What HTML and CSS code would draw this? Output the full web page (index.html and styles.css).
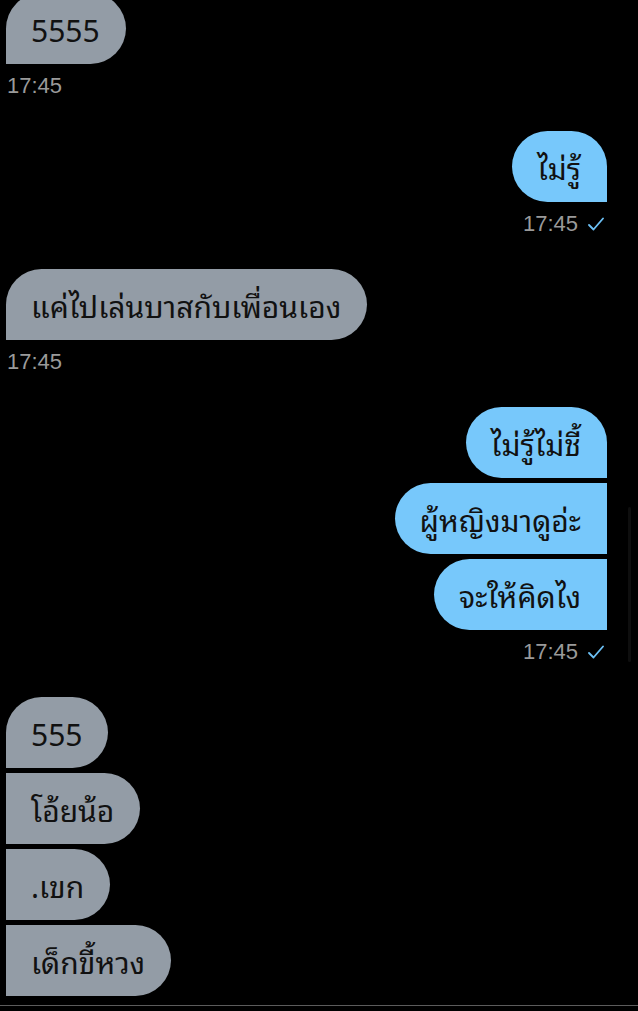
FILE: index.html
```html
<!DOCTYPE html>
<html lang="th">
<head>
  <meta charset="UTF-8" />
  <meta name="viewport" content="width=device-width, initial-scale=1.0"/>
  <title>Chat</title>
  <link rel="stylesheet" href="styles.css">
</head>
<body>
  <div class="chat">

    <div class="group in">
      <div class="bubble first">5555</div>
      <div class="time">17:45</div>
    </div>

    <div class="group out">
      <div class="bubble first">ไม่รู้</div>
      <div class="time">17:45 <svg class="tick" viewBox="0 0 16 14" width="16" height="14"><polyline points="1,8 5.5,12.5 15,1.5" /></svg></div>
    </div>

    <div class="group in">
      <div class="bubble first">แค่ไปเล่นบาสกับเพื่อนเอง</div>
      <div class="time">17:45</div>
    </div>

    <div class="group out">
      <div class="bubble first">ไม่รู้ไม่ชี้</div>
      <div class="bubble">ผู้หญิงมาดูอ่ะ</div>
      <div class="bubble">จะให้คิดไง</div>
      <div class="time">17:45 <svg class="tick" viewBox="0 0 16 14" width="16" height="14"><polyline points="1,8 5.5,12.5 15,1.5" /></svg></div>
    </div>

    <div class="group in">
      <div class="bubble first">555</div>
      <div class="bubble">โอ้ยน้อ</div>
      <div class="bubble">.เขก</div>
      <div class="bubble">เด็กขี้หวง</div>
    </div>

  </div>
  <div class="scroll-thumb"></div>
  <div class="bottom-bar"></div>
</body>
</html>
```

FILE: styles.css
```css
html, body {
  margin: 0;
  padding: 0;
  background: #000;
}
body {
  font-family: "Noto Sans Thai Looped", "Noto Sans Thai", "Liberation Sans", "DejaVu Sans", sans-serif;
  width: 638px;
  height: 1011px;
  overflow: hidden;
  position: relative;
}

.chat {
  display: flex;
  flex-direction: column;
  gap: 31px;
  margin-top: -7px;
  padding: 0 31px 0 6px;
}

.group {
  display: flex;
  flex-direction: column;
  gap: 5px;
}
.group.in {
  align-items: flex-start;
}
.group.out {
  align-items: flex-end;
}

.bubble {
  height: 71px;
  box-sizing: border-box;
  padding: 0 26px 0 25px;
  display: flex;
  align-items: center;
  font-size: 30px;
  color: #111;
  white-space: nowrap;
}
.in .bubble {
  background: #939ca6;
  border-radius: 0 36px 36px 0;
}
.in .bubble.first {
  border-top-left-radius: 36px;
}
.out .bubble {
  background: #77c8fb;
  border-radius: 36px 0 0 36px;
}
.out .bubble.first {
  border-top-right-radius: 36px;
}

.time {
  font-family: "Liberation Sans", Arial, sans-serif;
  font-size: 22px;
  color: #9a9a9a;
  line-height: 28px;
  margin-top: 3px;
  display: flex;
  align-items: center;
  gap: 10px;
}
.in .time {
  padding-left: 1px;
}
.out .time {
  margin-right: 3px;
}
.tick {
  fill: none;
  stroke: #6cc0f5;
  stroke-width: 1.8;
  stroke-linecap: round;
  stroke-linejoin: round;
}

.scroll-thumb {
  position: absolute;
  left: 628px;
  top: 507px;
  width: 3px;
  height: 155px;
  border-radius: 2px;
  background: #0e0e0e;
}

.bottom-bar {
  position: absolute;
  left: 0;
  right: 0;
  top: 1005px;
  height: 1px;
  background: #5c5c5c;
}
```
